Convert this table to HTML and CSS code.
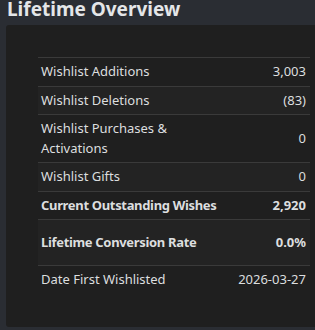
FILE: index.html
```html
<!DOCTYPE html>
<html>
<head>
<meta charset="utf-8">
<link rel="stylesheet" href="styles.css">
</head>
<body>
<h2 class="title">Lifetime Overview</h2>
<div class="card">
  <table class="stats">
    <tr><td class="label">Wishlist Additions</td><td class="val">3,003</td></tr>
    <tr><td class="label">Wishlist Deletions</td><td class="val">(83)</td></tr>
    <tr><td class="label">Wishlist Purchases &amp;<br>Activations</td><td class="val">0</td></tr>
    <tr><td class="label">Wishlist Gifts</td><td class="val">0</td></tr>
    <tr class="bold"><td class="label">Current Outstanding Wishes</td><td class="val">2,920</td></tr>
    <tr class="bold tall"><td class="label">Lifetime Conversion Rate</td><td class="val">0.0%</td></tr>
    <tr class="last"><td class="label">Date First Wishlisted</td><td class="val">2026-03-27</td></tr>
  </table>
</div>
</body>
</html>
```
FILE: styles.css
```css
html, body {
  margin: 0;
  padding: 0;
  background: #2a2d33;
  font-family: "Noto Sans", "Open Sans", sans-serif;
  color: #dcdedf;
  overflow: hidden;
}
.title {
  margin: 0;
  padding: 0 0 6px 7px;
  font-size: 19px;
  line-height: 19px;
  font-weight: 700;
  color: #e4e6e8;
}
.card {
  margin-left: 6px;
  width: 320px;
  background: #1f1f1f;
  border-radius: 3px;
  padding: 32px 0 33px 32px;
  box-sizing: border-box;
}
.stats {
  width: 272px;
  border-collapse: collapse;
  font-size: 13px;
  line-height: 19.5px;
}
.stats td {
  border-top: 1px solid #3a3a3a;
  padding: 4px 4px 4px 3px;
  vertical-align: middle;
}
.stats tr:nth-child(even) td {
  background: #232323;
}
.stats .val {
  text-align: right;
  white-space: nowrap;
}
.stats .bold td {
  font-weight: 700;
}
.stats .bold .label {
  letter-spacing: -0.33px;
}
.stats .tall td {
  padding-top: 12.75px;
  padding-bottom: 12.75px;
}
```
